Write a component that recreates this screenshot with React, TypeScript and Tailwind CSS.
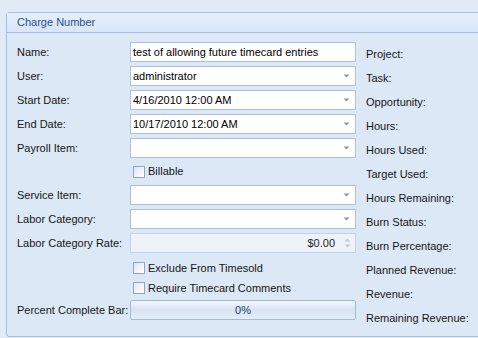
import React from "react";

const FONT = { fontFamily: '"Liberation Sans", Arial, sans-serif' };

function Arrow() {
  return (
    <svg width="7" height="4" viewBox="0 0 7 4" className="shrink-0">
      <path d="M0.5 0.5 L6.5 0.5 L3.5 3.5 Z" fill="#8c97a6" />
    </svg>
  );
}

function TextBox({ value }: { value: string }) {
  return (
    <div className="h-[20px] w-[226px] border border-[#abc1de] bg-white flex items-center px-[2px] text-black">
      <span className="truncate">{value}</span>
    </div>
  );
}

function Combo({ value }: { value?: string }) {
  return (
    <div className="h-[20px] w-[226px] border border-[#abc1de] bg-white flex items-center pl-[2px] pr-[5px] text-black">
      <span className="flex-1 truncate">{value}</span>
      <Arrow />
    </div>
  );
}

function Spin({ value }: { value: string }) {
  return (
    <div className="h-[20px] w-[226px] border border-[#c3d3e7] bg-[#eef3f9] flex items-center pr-[4px] text-[#1e1e1e]">
      <span className="flex-1 text-right pr-[9px]">{value}</span>
      <svg width="7" height="12" viewBox="0 0 7 12">
        <path d="M0.5 4.5 L6.5 4.5 L3.5 1.5 Z" fill="#c4cad3" />
        <path d="M0.5 7.5 L6.5 7.5 L3.5 10.5 Z" fill="#c4cad3" />
      </svg>
    </div>
  );
}

function Check({ label }: { label: string }) {
  return (
    <div className="flex items-center gap-[3px] pl-[3px]">
      <div className="w-[12px] h-[12px] border border-[#8aa6ca] bg-gradient-to-br from-[#dfe7f2] to-white" />
      <span>{label}</span>
    </div>
  );
}

function Row({ label, h = "h-[20px]", mb = "mb-[4px]", children }: { label?: string; h?: string; mb?: string; children?: React.ReactNode }) {
  return (
    <div className={`flex items-center ${h} ${mb}`}>
      <div className="w-[113px] shrink-0">{label}</div>
      {children}
    </div>
  );
}

const RIGHT = [
  "Project:",
  "Task:",
  "Opportunity:",
  "Hours:",
  "Hours Used:",
  "Target Used:",
  "Hours Remaining:",
  "Burn Status:",
  "Burn Percentage:",
  "Planned Revenue:",
  "Revenue:",
  "Remaining Revenue:",
];

export default function App() {
  return (
    <div className="w-[478px] h-[338px] overflow-hidden bg-[#e1ebf8] pt-[12px] pl-[6px] text-[11px] text-[#161616]" style={FONT}>
      <div className="w-[490px] h-[325px] border border-[#a8bedb] rounded-[3px] bg-[#dce8f6] flex flex-col">
        {/* Header */}
        <div className="h-[20px] border-b border-[#a8bedb] bg-gradient-to-b from-[#e6effb] to-[#d9e6f7] flex items-center pl-[10px] text-[#1f4f8f]">
          Charge Number
        </div>

        <div className="flex pl-[10px] pt-[9px]">
          {/* Left */}
          <div className="flex flex-col w-[349px]">
            <Row label="Name:"><TextBox value="test of allowing future timecard entries" /></Row>
            <Row label="User:"><Combo value="administrator" /></Row>
            <Row label="Start Date:"><Combo value="4/16/2010 12:00 AM" /></Row>
            <Row label="End Date:"><Combo value="10/17/2010 12:00 AM" /></Row>
            <Row label="Payroll Item:" mb="mb-0"><Combo /></Row>
            <Row h="h-[27px]" mb="mb-0"><Check label="Billable" /></Row>
            <Row label="Service Item:"><Combo /></Row>
            <Row label="Labor Category:"><Combo /></Row>
            <Row label="Labor Category Rate:" mb="mb-[5px]"><Spin value="$0.00" /></Row>
            <Row mb="mb-0"><Check label="Exclude From Timesold" /></Row>
            <Row mb="mb-[2px]"><Check label="Require Timecard Comments" /></Row>
            <Row label="Percent Complete Bar:" mb="mb-0">
              <div className="h-[20px] w-[226px] border border-[#a3bad8] rounded-[2px] bg-gradient-to-b from-[#f3f7fc] via-[#d6e3f3] to-[#e6eef8] flex items-center justify-center text-[#1f3c6b]">
                0%
              </div>
            </Row>
          </div>

          {/* Right */}
          <div className="flex flex-col">
            {RIGHT.map((t) => (
              <div key={t} className="h-[24px] flex items-center">{t}</div>
            ))}
          </div>
        </div>
      </div>
    </div>
  );
}
